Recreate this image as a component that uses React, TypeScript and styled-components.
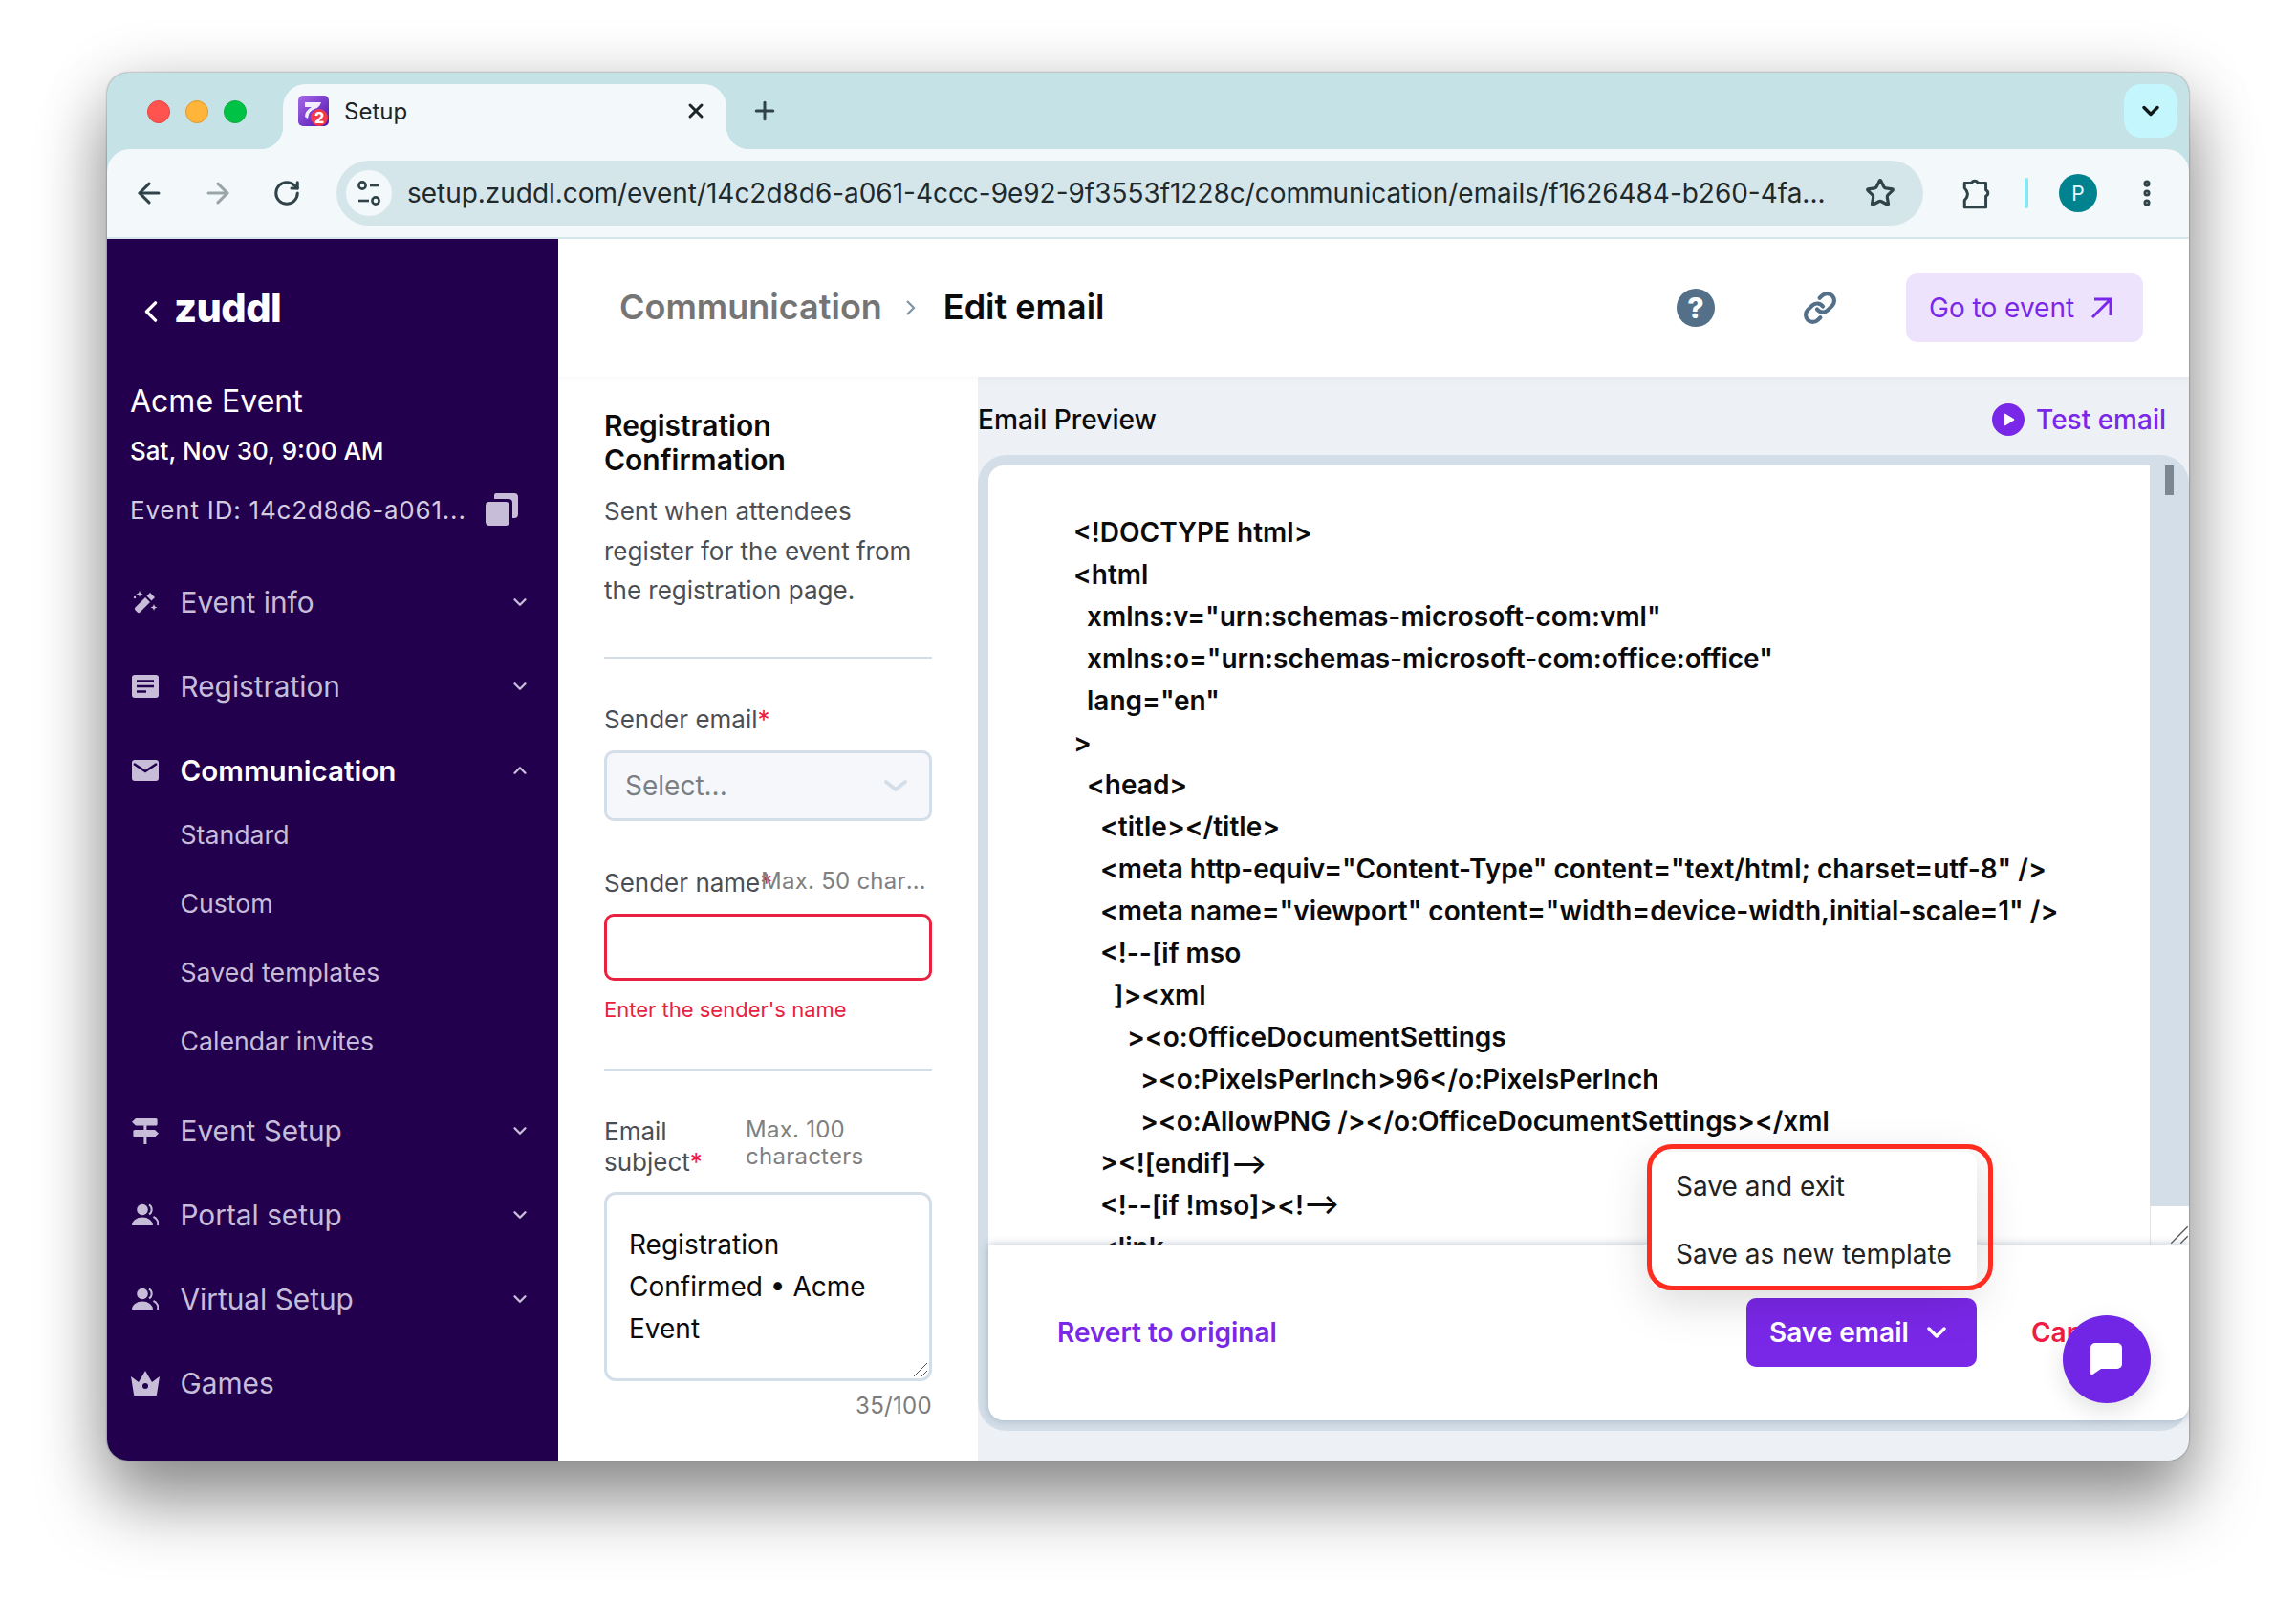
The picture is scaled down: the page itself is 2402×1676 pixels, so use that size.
import { ReactNode } from 'react';
import styled, { createGlobalStyle } from 'styled-components';
import { ArrowLeft, ArrowRight, ChevronDown, ChevronUp, EllipsisVertical, Link, Plus, RotateCw, Star, X } from 'lucide-react';

const GlobalStyle = createGlobalStyle`
  html, body {
    margin: 0;
    padding: 0;
    background: #fff;
    font-family: Inter, "Liberation Sans", sans-serif;
  }
  * {
    box-sizing: border-box;
  }
`;

const Page = styled.div`
  width: 2402px;
  height: 1676px;
  padding: 76px 112px 148px;
  overflow: hidden;
`;

const Window = styled.div`
  position: relative;
  width: 2178px;
  height: 1452px;
  border-radius: 22px;
  background: #c5e2e7;
  display: flex;
  flex-direction: column;
  box-shadow: 0 0 2px rgba(0, 0, 0, 0.55), 0 46px 72px rgba(0, 0, 0, 0.36), 0 12px 70px rgba(0, 0, 0, 0.2);
`;

const TabStrip = styled.div`
  height: 80px;
  flex: none;
  display: flex;
  align-items: flex-end;
  padding-left: 42px;
  position: relative;
`;

const Lights = styled.div`
  display: flex;
  gap: 16px;
  height: 68px;
  padding-top: 17px;
  width: 142px;
  flex: none;
`;

const Light = styled.span<{ $color: string; $edge: string }>`
  width: 24px;
  height: 24px;
  border-radius: 50%;
  background: ${p => p.$color};
  border: 1px solid ${p => p.$edge};
`;

const Tab = styled.div`
  position: relative;
  width: 464px;
  height: 68px;
  background: #f3f8fb;
  border-radius: 24px 24px 0 0;
  display: flex;
  align-items: center;
  padding: 0 20px 12px 16px;
  color: #1c2528;
  font-size: 24px;

  &::before,
  &::after {
    content: '';
    position: absolute;
    bottom: 0;
    width: 24px;
    height: 24px;
  }
  &::before {
    left: -24px;
    background: radial-gradient(circle at 0 0, transparent 24px, #f3f8fb 24.5px);
  }
  &::after {
    right: -24px;
    background: radial-gradient(circle at 100% 0, transparent 24px, #f3f8fb 24.5px);
  }
`;

const TabTitle = styled.span`
  margin-left: 16px;
  flex: 1;
`;

const NewTab = styled.div`
  width: 80px;
  height: 68px;
  padding: 0 0 12px 0;
  display: flex;
  align-items: center;
  justify-content: center;
  color: #2f4348;
`;

const TabMenu = styled.div`
  position: absolute;
  right: 12px;
  top: 12px;
  width: 56px;
  height: 56px;
  border-radius: 18px;
  background: #c4f7fd;
  display: flex;
  align-items: center;
  justify-content: center;
  color: #10181a;
`;

const Toolbar = styled.div`
  height: 94px;
  flex: none;
  background: #f3f8fb;
  border-radius: 24px 24px 0 0;
  border-bottom: 2px solid #d5e6ea;
  display: flex;
  align-items: center;
  padding: 0 0 0 27px;
  color: #2f4348;
`;

const NavButton = styled.div<{ $muted?: boolean }>`
  width: 34px;
  height: 34px;
  margin-right: 38px;
  display: flex;
  align-items: center;
  justify-content: center;
  color: ${p => (p.$muted ? '#9aa5a8' : '#2f4348')};
`;

const Omnibox = styled.div`
  width: 1660px;
  height: 68px;
  margin-left: -3px;
  border-radius: 34px;
  background: #d5e6ea;
  display: flex;
  align-items: center;
  padding: 0 29px 0 10px;
`;

const SiteIcon = styled.div`
  width: 48px;
  height: 48px;
  flex: none;
  border-radius: 50%;
  background: #f3f8fb;
  display: flex;
  align-items: center;
  justify-content: center;
`;

const Url = styled.div`
  margin-left: 16px;
  flex: 1;
  font-size: 27.95px;
  color: #20292c;
  white-space: nowrap;
`;

const ToolbarEnd = styled.div`
  display: flex;
  align-items: center;
  margin-left: 39px;
`;

const Divider = styled.span`
  width: 4px;
  height: 32px;
  border-radius: 2px;
  background: #86e8f5;
  margin: 0 32px 0 33px;
`;

const Avatar = styled.div`
  width: 40px;
  height: 40px;
  border-radius: 50%;
  background: #00838f;
  color: #e6fafc;
  display: flex;
  align-items: center;
  justify-content: center;
  font-size: 21px;
`;

const Kebab = styled.div`
  margin-left: 35px;
  display: flex;
  color: #2f4348;
`;

const Body = styled.div`
  flex: 1;
  min-height: 0;
  display: flex;
  border-radius: 0 0 22px 22px;
  overflow: hidden;
`;

const Sidebar = styled.aside`
  width: 472px;
  flex: none;
  background: #22004d;
  padding-left: 24px;
  color: #fff;
`;

const LogoRow = styled.div`
  height: 144px;
  display: flex;
  align-items: center;
  padding-left: 15px;
  gap: 17px;
  color: #fff;
`;

const LogoChevron = styled.svg`
  margin-top: 8px;
  flex: none;
`;

const LogoWord = styled.span`
  font-size: 41.5px;
  font-weight: 800;
  letter-spacing: -0.6px;
  line-height: 1;
  color: #fff;
  margin-top: 2px;
`;

const EventName = styled.div`
  margin-top: 6px;
  font-size: 32px;
  line-height: 40px;
  color: #fff;
`;

const EventDate = styled.div`
  margin-top: 14px;
  font-size: 26px;
  line-height: 36px;
  font-weight: 500;
  color: #fff;
`;

const EventId = styled.div`
  margin-top: 25px;
  height: 36px;
  display: flex;
  align-items: center;
  gap: 20px;
  font-size: 26px;
  letter-spacing: 0.8px;
  color: #d4cce0;
`;

const Nav = styled.nav`
  margin-top: 35px;
`;

const NavRow = styled.div<{ $active?: boolean }>`
  height: 88px;
  display: flex;
  align-items: center;
  padding-right: 29px;
  font-size: ${p => (p.$active ? 29.6 : 29.8)}px;
  font-weight: ${p => (p.$active ? 600 : 400)};
  color: ${p => (p.$active ? '#fff' : '#c8bdd9')};
`;

const NavIcon = styled.span`
  width: 32px;
  height: 32px;
  flex: none;
  margin-right: 20.5px;
  display: flex;
  align-items: center;
  justify-content: center;
  color: #c8bdd9;
`;

const NavLabel = styled.span`
  flex: 1;
`;

const NavChevron = styled.span`
  display: flex;
  color: #c8bdd9;
`;

const SubList = styled.div`
  margin: -13px 0 14px;
`;

const SubItem = styled.div`
  height: 72px;
  padding-left: 52.5px;
  display: flex;
  align-items: center;
  font-size: 26.7px;
  color: #c8bdd9;
`;

const Main = styled.main`
  flex: 1;
  min-width: 0;
  display: flex;
  flex-direction: column;
`;

const Header = styled.header`
  height: 144px;
  flex: none;
  background: #fff;
  display: flex;
  align-items: center;
  padding: 0 48px 0 64px;
`;

const Crumb = styled.span<{ $current?: boolean }>`
  font-size: 36px;
  font-weight: 600;
  margin-top: -2px;
  color: ${p => (p.$current ? '#0b0b0b' : '#757575')};
`;

const CrumbSep = styled.span`
  display: flex;
  margin: 0 28px 0 24px;
  color: #7f94a8;
`;

const HeaderIcons = styled.div`
  margin-left: auto;
  display: flex;
  align-items: center;
  gap: 90px;
  margin-right: 70px;
`;

const HelpIcon = styled.div`
  width: 40px;
  height: 40px;
  border-radius: 50%;
  background: #547089;
  color: #fff;
  font-size: 30px;
  font-weight: 800;
  display: flex;
  align-items: center;
  justify-content: center;
`;

const LinkIcon = styled.div`
  width: 40px;
  height: 40px;
  display: flex;
  align-items: center;
  justify-content: center;
  color: #547089;
`;

const GoButton = styled.div`
  width: 248px;
  height: 72px;
  border-radius: 12px;
  background: #eee3fc;
  color: #7a28e8;
  font-size: 28px;
  display: flex;
  align-items: center;
  padding-left: 24px;
  gap: 17px;
`;

const Content = styled.div`
  flex: 1;
  min-height: 0;
  display: flex;
`;

const FormPanel = styled.section`
  width: 439px;
  flex: none;
  background: #fff;
  padding: 33px 48px 0 49px;
  box-shadow: inset 0 8px 8px -8px rgba(0, 0, 0, 0.05);
`;

const FormTitle = styled.h2`
  margin: 0 0 0 -1px;
  font-size: 30px;
  line-height: 36px;
  font-weight: 600;
  color: #0b0b0b;
`;

const FormDesc = styled.p`
  margin: 15px 0 0 -1px;
  font-size: 26px;
  line-height: 41.5px;
  color: #4a4f55;
`;

const Rule = styled.hr<{ $gap: number }>`
  margin: ${p => p.$gap}px 0 0 -1px;
  border: 0;
  height: 2px;
  background: #d3dee8;
`;

const FieldRow = styled.div<{ $top: number }>`
  margin-top: ${p => p.$top}px;
  margin-left: -1px;
  display: flex;
  align-items: flex-start;
`;

const FieldLabel = styled.label<{ $width?: number; $nowrap?: boolean }>`
  flex: none;
  ${p => p.$width && `width: ${p.$width}px;`}
  font-size: 26px;
  line-height: 32px;
  color: #4a4f55;
  white-space: ${p => (p.$nowrap ? 'nowrap' : 'normal')};
`;

const Required = styled.span`
  color: #ef1c44;
`;

const FieldHint = styled.span<{ $clip?: boolean }>`
  flex: 1;
  min-width: 0;
  font-size: 24px;
  line-height: 28px;
  letter-spacing: 0.25px;
  color: #808080;
  ${p => p.$clip && 'white-space: nowrap; overflow: hidden; text-overflow: ellipsis;'}
`;

const Select = styled.div`
  margin: 16px 0 0 -1px;
  height: 74px;
  border: 3px solid #d3dee8;
  border-radius: 10px;
  background: #f5f7fb;
  display: flex;
  align-items: center;
  justify-content: space-between;
  padding: 0 22px 0 19px;
  font-size: 28px;
  color: #7a7f85;
`;

const SelectChevron = styled.svg`
  flex: none;
  color: #d3dee8;
`;

const TextInput = styled.div`
  margin: 16px 0 0 -1px;
  height: 70px;
  border: 3px solid #e8213f;
  border-radius: 10px;
  background: #fff;
`;

const ErrorText = styled.div`
  margin: 16px 0 0 -1px;
  font-size: 22px;
  line-height: 28px;
  color: #e8213f;
`;

const SubjectBox = styled.div`
  position: relative;
  margin: 15px 0 0 -1px;
  height: 198px;
  border: 3px solid #d3dee8;
  border-radius: 12px;
  padding: 30px 20px 0 23px;
  font-size: 28px;
  line-height: 44px;
  color: #0b0b0b;
`;

const Grip = styled.span`
  position: absolute;
  display: flex;
  right: 1px;
  bottom: 1px;
`;

const Counter = styled.div`
  margin-top: 11px;
  text-align: right;
  font-size: 24px;
  line-height: 30px;
  letter-spacing: 0.3px;
  color: #7b7b7b;
`;

const Preview = styled.section`
  flex: 1;
  min-width: 0;
  background: #edf0f5;
  display: flex;
  flex-direction: column;
  padding-bottom: 31px;
  box-shadow: inset 0 10px 10px -8px rgba(0, 0, 0, 0.04);
`;

const PreviewBar = styled.div`
  height: 82px;
  flex: none;
  display: flex;
  align-items: center;
  justify-content: space-between;
  padding: 8px 24px 0 0;
`;

const PreviewTitle = styled.span`
  font-size: 28.2px;
  font-weight: 500;
  color: #0b0b0b;
`;

const TestLink = styled.span`
  display: flex;
  align-items: center;
  gap: 12px;
  font-size: 28px;
  font-weight: 500;
  color: #7a28e8;
`;

const Frame = styled.div`
  flex: 1;
  min-height: 0;
  background: #d3dee8;
  border-radius: 30px;
  padding: 11px 0 11px 11px;
  display: flex;
  flex-direction: column;
`;

const EditorRow = styled.div`
  flex: 1;
  min-height: 0;
  display: flex;
`;

const Code = styled.div`
  flex: 1;
  min-width: 0;
  background: #fff;
  border-radius: 16px 0 0 0;
  padding: 48px 0 0 89px;
  overflow: hidden;
  font-size: 28px;
  line-height: 44px;
  font-weight: 600;
  color: #0b0b0b;
  white-space: nowrap;
`;

const CodeLine = styled.div<{ $indent: number }>`
  padding-left: ${p => p.$indent * 14}px;
`;

const ScrollTrack = styled.div`
  width: 41px;
  flex: none;
  display: flex;
  flex-direction: column;
`;

const ScrollThumb = styled.span`
  width: 9px;
  height: 31px;
  margin-left: 16px;
  background: #7b8792;
`;

const ScrollCorner = styled.div`
  margin-top: auto;
  height: 40px;
  background: #fff;
  border-left: 1px solid #e2e6ea;
  display: flex;
  align-items: flex-end;
  justify-content: flex-end;
`;

const Footer = styled.div`
  position: relative;
  height: 184px;
  flex: none;
  background: #fff;
  border-radius: 0 0 16px 16px;
  box-shadow: 0 0 8px rgba(84, 112, 137, 0.4);
  display: flex;
  align-items: center;
  padding: 0 71px 0 72px;
  font-size: 28px;
`;

const Revert = styled.span`
  color: #7a28e8;
  font-weight: 600;
`;

const SaveButton = styled.div`
  margin-left: auto;
  width: 241px;
  height: 72px;
  border-radius: 10px;
  background: #7a28e8;
  color: #fff;
  font-weight: 600;
  display: flex;
  align-items: center;
  padding-left: 24px;
  gap: 13px;
`;

const Cancel = styled.span`
  margin-left: 57px;
  color: #ef1c44;
  font-weight: 600;
`;

const Menu = styled.div`
  position: absolute;
  left: 693px;
  top: -97px;
  width: 341px;
  height: 143px;
  background: #fff;
  border-radius: 12px;
  box-shadow: 0 12px 50px rgba(0, 0, 0, 0.16);
  color: #222;
  padding-left: 26px;
  display: flex;
  flex-direction: column;
`;

const MenuItem = styled.div`
  height: 72px;
  display: flex;
  align-items: center;
`;

const Callout = styled.div`
  position: absolute;
  inset: -8px -17px -2px -4px;
  border: 5px solid #ff2d20;
  border-radius: 26px;
`;

const ChatBubble = styled.div`
  position: absolute;
  right: 40px;
  bottom: 60px;
  width: 92px;
  height: 92px;
  border-radius: 50%;
  background: #7026e4;
  display: flex;
  align-items: center;
  justify-content: center;
  box-shadow: 0 8px 24px rgba(0, 0, 0, 0.12);
`;

function Favicon() {
  return (
    <svg width="32" height="32" viewBox="0 0 32 32">
      <defs>
        <linearGradient id="fav" x1="0" y1="0" x2="1" y2="1">
          <stop offset="0" stopColor="#a86ae8" />
          <stop offset="1" stopColor="#4f12b0" />
        </linearGradient>
      </defs>
      <rect width="32" height="32" rx="5" fill="url(#fav)" />
      <path d="M7 7 H24 Q22 13 17 14 Q11 16 10 24 L7 22 Q7 16 14 12 H7 Z" fill="#f4ecfc" />
      <circle cx="22" cy="23" r="9" fill="#f4394d" />
      <text x="22" y="29" textAnchor="middle" fontSize="16" fontWeight="800" fill="#fff" fontFamily="Inter, sans-serif">2</text>
    </svg>
  );
}

function TuneIcon() {
  return (
    <svg width="24" height="30" viewBox="0 0 24 30" fill="none" stroke="#2f4348" strokeWidth="2.6">
      <circle cx="5" cy="7" r="3.6" />
      <path d="M13 7 H23" />
      <path d="M1 23 H12" />
      <circle cx="19" cy="23" r="3.6" />
    </svg>
  );
}

function PuzzleIcon() {
  return (
    <svg width="34" height="34" viewBox="0 0 32 32" fill="none" stroke="#2f4348" strokeWidth="2.8" strokeLinejoin="round">
      <path d="M4 6 H11 A3.2 3.2 0 0 1 17 6 H25 V13 A3.2 3.2 0 0 1 25 19 V30 H4 V23 Q10 17 4 11 Z" />
    </svg>
  );
}

function CopyIcon() {
  return (
    <svg width="34" height="34" viewBox="0 0 34 34" fill="#c8bdd9">
      <path d="M11 0 H30 a4 4 0 0 1 4 4 V22 a4 4 0 0 1 -4 4 H28 V10 a4 4 0 0 0 -4 -4 H9 V2 a2 2 0 0 1 2 -2 Z" />
      <rect x="0" y="9" width="25" height="25" rx="4" />
    </svg>
  );
}

function WandIcon() {
  return (
    <svg width="26" height="26" viewBox="0 0 26 26" fill="currentColor">
      <path d="M18 3 l5 5 -3.5 3.5 -5 -5 Z" />
      <path d="M13 8 l5 5 -10.5 10.5 a2 2 0 0 1 -2.8 0 l-2.2 -2.2 a2 2 0 0 1 0 -2.8 Z" />
      <path d="M7 1 l1 2.4 2.4 1 -2.4 1 -1 2.4 -1 -2.4 -2.4 -1 2.4 -1 Z" />
      <path d="M22 15 l1 2.4 2.4 1 -2.4 1 -1 2.4 -1 -2.4 -2.4 -1 2.4 -1 Z" />
      <circle cx="2" cy="8" r="1.2" />
    </svg>
  );
}

function FormIcon() {
  return (
    <svg width="28" height="24" viewBox="0 0 28 24">
      <rect width="28" height="24" rx="3" fill="currentColor" />
      <path d="M5 6.5 H23 M5 12 H23 M5 17.5 H15" stroke="#22004d" strokeWidth="2.4" />
    </svg>
  );
}

function MailIcon() {
  return (
    <svg width="28" height="22" viewBox="0 0 28 22">
      <rect width="28" height="22" rx="3" fill="currentColor" />
      <path d="M2 4 L14 12 L26 4" fill="none" stroke="#22004d" strokeWidth="2.6" />
    </svg>
  );
}

function SignIcon() {
  return (
    <svg width="28" height="28" viewBox="0 0 28 28" fill="currentColor">
      <path d="M4 1 H25 a1.6 1.6 0 0 1 1.6 1.6 V7 a1.6 1.6 0 0 1 -1.6 1.6 H4 L0 4.8 Z" />
      <path d="M3 13 H24 L28 16.8 24 20.6 H3 a1.6 1.6 0 0 1 -1.6 -1.6 V14.6 A1.6 1.6 0 0 1 3 13 Z" />
      <rect x="12.4" y="8" width="3" height="20" />
    </svg>
  );
}

function PeopleIcon() {
  return (
    <svg width="28" height="24" viewBox="0 0 28 24" fill="currentColor">
      <circle cx="11" cy="6.5" r="5.8" />
      <path d="M0 23 a11 8.5 0 0 1 22 0 Z" />
      <path d="M18 1.4 a6 6 0 0 1 0 10 M22.5 14 a9 8 0 0 1 4.5 9" fill="none" stroke="currentColor" strokeWidth="2" />
    </svg>
  );
}

function CrownIcon() {
  return (
    <svg width="30" height="26" viewBox="0 0 30 26">
      <path d="M0 6 L8 12 L15 0 L22 12 L30 6 L27 25 Q27 26 26 26 H4 Q3 26 3 25 Z" fill="currentColor" />
      <circle cx="15" cy="16" r="3" fill="#22004d" />
    </svg>
  );
}

function GripLines({ size }: { size: number }) {
  return (
    <svg width={size} height={size} viewBox="0 0 16 16" stroke="#555" strokeWidth="1">
      <path d="M1 15 L15 1 M9 15 L15 9" />
    </svg>
  );
}

interface NavEntry {
  label: string;
  icon: ReactNode;
  active?: boolean;
  noChevron?: boolean;
  children?: string[];
}

const navEntries: NavEntry[] = [
  { label: 'Event info', icon: <WandIcon /> },
  { label: 'Registration', icon: <FormIcon /> },
  {
    label: 'Communication',
    icon: <MailIcon />,
    active: true,
    children: ['Standard', 'Custom', 'Saved templates', 'Calendar invites'],
  },
  { label: 'Event Setup', icon: <SignIcon /> },
  { label: 'Portal setup', icon: <PeopleIcon /> },
  { label: 'Virtual Setup', icon: <PeopleIcon /> },
  { label: 'Games', icon: <CrownIcon />, noChevron: true },
];

const codeLines: [number, string][] = [
  [0, '<!DOCTYPE html>'],
  [0, '<html'],
  [1, 'xmlns:v="urn:schemas-microsoft-com:vml"'],
  [1, 'xmlns:o="urn:schemas-microsoft-com:office:office"'],
  [1, 'lang="en"'],
  [0, '>'],
  [1, '<head>'],
  [2, '<title></title>'],
  [2, '<meta http-equiv="Content-Type" content="text/html; charset=utf-8" />'],
  [2, '<meta name="viewport" content="width=device-width,initial-scale=1" />'],
  [2, '<!--[if mso'],
  [3, ']><xml'],
  [4, '><o:OfficeDocumentSettings'],
  [5, '><o:PixelsPerInch>96</o:PixelsPerInch'],
  [5, '><o:AllowPNG /></o:OfficeDocumentSettings></xml'],
  [2, '><![endif]-->'],
  [2, '<!--[if !mso]><!-->'],
  [2, '<link'],
  [3, 'href="https://fonts.googleapis.com"'],
];

export default function App() {
  return (
    <>
      <GlobalStyle />
      <Page>
        <Window>
          <TabStrip>
            <Lights>
              <Light $color="#ff5350" $edge="#e2463f" />
              <Light $color="#ffb53a" $edge="#e0982c" />
              <Light $color="#00c244" $edge="#12a83e" />
            </Lights>
            <Tab>
              <Favicon />
              <TabTitle>Setup</TabTitle>
              <X size={24} strokeWidth={3} color="#1c2528" />
            </Tab>
            <NewTab>
              <Plus size={30} strokeWidth={2.4} />
            </NewTab>
            <TabMenu>
              <ChevronDown size={28} strokeWidth={3} />
            </TabMenu>
          </TabStrip>

          <Toolbar>
            <NavButton><ArrowLeft size={34} strokeWidth={2.2} /></NavButton>
            <NavButton $muted><ArrowRight size={34} strokeWidth={2.2} /></NavButton>
            <NavButton><RotateCw size={30} strokeWidth={2.4} /></NavButton>
            <Omnibox>
              <SiteIcon><TuneIcon /></SiteIcon>
              <Url>setup.zuddl.com/event/14c2d8d6-a061-4ccc-9e92-9f3553f1228c/communication/emails/f1626484-b260-4fa...</Url>
              <Star size={32} strokeWidth={2.4} color="#2f4348" />
            </Omnibox>
            <ToolbarEnd>
              <PuzzleIcon />
              <Divider />
              <Avatar>P</Avatar>
              <Kebab><EllipsisVertical size={34} strokeWidth={3} /></Kebab>
            </ToolbarEnd>
          </Toolbar>

          <Body>
            <Sidebar>
              <LogoRow>
                <LogoChevron width="14" height="22" viewBox="0 0 14 24" fill="none" stroke="#fff" strokeWidth="3.6" strokeLinecap="round" strokeLinejoin="round">
                  <path d="M12 2 L2 12 L12 22" />
                </LogoChevron>
                <LogoWord>zuddl</LogoWord>
              </LogoRow>
              <EventName>Acme Event</EventName>
              <EventDate>Sat, Nov 30, 9:00 AM</EventDate>
              <EventId>
                <span>Event ID: 14c2d8d6-a061...</span>
                <CopyIcon />
              </EventId>
              <Nav>
                {navEntries.map(entry => (
                  <div key={entry.label}>
                    <NavRow $active={entry.active}>
                      <NavIcon>{entry.icon}</NavIcon>
                      <NavLabel>{entry.label}</NavLabel>
                      {!entry.noChevron && (
                        <NavChevron>
                          {entry.active ? <ChevronUp size={22} strokeWidth={2.6} /> : <ChevronDown size={22} strokeWidth={2.6} />}
                        </NavChevron>
                      )}
                    </NavRow>
                    {entry.children && (
                      <SubList>
                        {entry.children.map(child => <SubItem key={child}>{child}</SubItem>)}
                      </SubList>
                    )}
                  </div>
                ))}
              </Nav>
            </Sidebar>

            <Main>
              <Header>
                <Crumb>Communication</Crumb>
                <CrumbSep>
                  <svg width="12" height="20" viewBox="0 0 12 20" fill="none" stroke="currentColor" strokeWidth="2.2">
                    <path d="M2 3 L9 10 L2 17" />
                  </svg>
                </CrumbSep>
                <Crumb $current>Edit email</Crumb>
                <HeaderIcons>
                  <HelpIcon>?</HelpIcon>
                  <LinkIcon><Link size={36} strokeWidth={2.8} /></LinkIcon>
                </HeaderIcons>
                <GoButton>
                  Go to event
                  <svg width="24" height="24" viewBox="0 0 24 24" fill="none" stroke="currentColor" strokeWidth="3">
                    <path d="M2 22 L21 3 M4 3 H21 V20" />
                  </svg>
                </GoButton>
              </Header>

              <Content>
                <FormPanel>
                  <FormTitle>Registration Confirmation</FormTitle>
                  <FormDesc>Sent when attendees register for the event from the registration page.</FormDesc>
                  <Rule $gap={48} />

                  <FieldRow $top={48}>
                    <FieldLabel $nowrap>Sender email<Required>*</Required></FieldLabel>
                  </FieldRow>
                  <Select>
                    Select...
                    <SelectChevron width="26" height="14" viewBox="0 0 26 14" fill="none" stroke="currentColor" strokeWidth="4" strokeLinecap="round" strokeLinejoin="round">
                      <path d="M3 3 L13 11 L23 3" />
                    </SelectChevron>
                  </Select>

                  <FieldRow $top={49}>
                    <FieldLabel $width={164} $nowrap>Sender name<Required>*</Required></FieldLabel>
                    <FieldHint $clip>Max. 50 characters</FieldHint>
                  </FieldRow>
                  <TextInput />
                  <ErrorText>Enter the sender's name</ErrorText>
                  <Rule $gap={48} />

                  <FieldRow $top={48}>
                    <FieldLabel $width={148}>Email subject<Required>*</Required></FieldLabel>
                    <FieldHint>Max. 100 characters</FieldHint>
                  </FieldRow>
                  <SubjectBox>
                    Registration Confirmed • Acme Event
                    <Grip><GripLines size={16} /></Grip>
                  </SubjectBox>
                  <Counter>35/100</Counter>
                </FormPanel>

                <Preview>
                  <PreviewBar>
                    <PreviewTitle>Email Preview</PreviewTitle>
                    <TestLink>
                      <svg width="34" height="34" viewBox="0 0 34 34">
                        <circle cx="17" cy="17" r="17" fill="#7a28e8" />
                        <path d="M13.5 11.5 L22.5 17 L13.5 22.5 Z" fill="#fff" stroke="#fff" strokeWidth="1.5" strokeLinejoin="round" />
                      </svg>
                      Test email
                    </TestLink>
                  </PreviewBar>
                  <Frame>
                    <EditorRow>
                      <Code>
                        {codeLines.map(([indent, text], i) => (
                          <CodeLine key={i} $indent={indent}>{text}</CodeLine>
                        ))}
                      </Code>
                      <ScrollTrack>
                        <ScrollThumb />
                        <ScrollCorner><GripLines size={20} /></ScrollCorner>
                      </ScrollTrack>
                    </EditorRow>
                    <Footer>
                      <Revert>Revert to original</Revert>
                      <SaveButton>
                        Save email
                        <ChevronDown size={32} strokeWidth={2.6} />
                      </SaveButton>
                      <Cancel>Cancel</Cancel>
                      <Menu>
                        <MenuItem>Save and exit</MenuItem>
                        <MenuItem>Save as new template</MenuItem>
                        <Callout />
                      </Menu>
                    </Footer>
                  </Frame>
                </Preview>
              </Content>
            </Main>
          </Body>

          <ChatBubble>
            <svg width="36" height="36" viewBox="0 0 36 36" fill="#fff">
              <path d="M6 1 H29 a5 5 0 0 1 5 5 V23 a5 5 0 0 1 -5 5 H12 L4 33.6 Q1 35.5 1 32 V6 a5 5 0 0 1 5 -5 Z" />
            </svg>
          </ChatBubble>
        </Window>
      </Page>
    </>
  );
}
